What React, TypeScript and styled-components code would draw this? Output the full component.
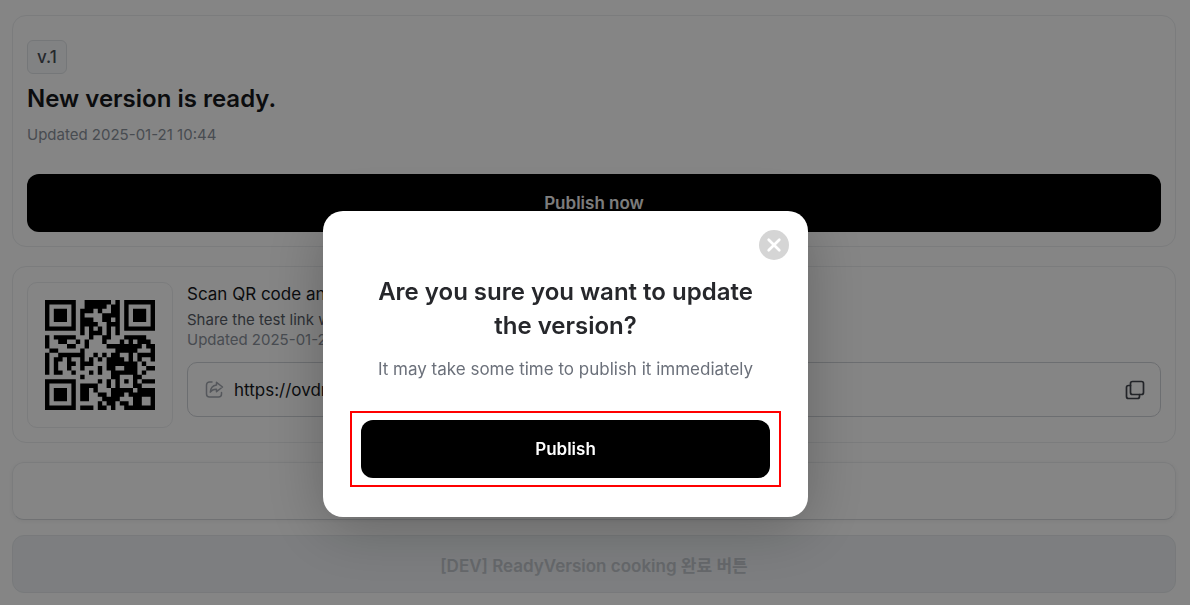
import React from "react";
import styled, { createGlobalStyle } from "styled-components";

const GlobalStyle = createGlobalStyle`
  * { box-sizing: border-box; }
  body {
    margin: 0;
    background: #ffffff;
    color: #16181c;
    font-family: Inter, "Noto Sans CJK KR", sans-serif;
    overflow: hidden;
  }
  h1, h2, p { margin: 0; }
  button, input { font: inherit; }
`;

const Page = styled.main`
  display: flex;
  flex-direction: column;
  gap: 19px;
  padding: 15px 14px 12px 12px;
`;

const Card = styled.section`
  border: 1px solid #eceef0;
  border-radius: 14px;
  padding: 15px 14px 14px;
`;

const ReleaseCard = styled(Card)`
  display: flex;
  flex-direction: column;
  align-items: flex-start;
  padding-top: 24px;
`;

const Badge = styled.span`
  padding: 0 9px;
  border: 1px solid #e1e4e8;
  border-radius: 6px;
  background: #f8f9fb;
  color: #4a4f57;
  font-size: 17px;
  font-weight: 500;
  line-height: 32px;
`;

const Title = styled.h1`
  margin-top: 8px;
  font-size: 24px;
  font-weight: 600;
  line-height: 34px;
`;

const Meta = styled.p<{ $tone?: "strong" }>`
  color: ${(p) => (p.$tone === "strong" ? "#565c66" : "#8b929c")};
  font-size: 15px;
  line-height: 20px;
`;

const ReleaseDate = styled(Meta)`
  margin: 9px 0 29px;
`;

const Button = styled.button<{ $variant?: "muted" }>`
  width: 100%;
  height: 58px;
  padding: 0;
  border: ${(p) => (p.$variant === "muted" ? "1px solid #e6e9ec" : "0")};
  border-radius: 12px;
  background: ${(p) => (p.$variant === "muted" ? "#eff2f5" : "#000000")};
  color: ${(p) => (p.$variant === "muted" ? "#c2c7cd" : "#ffffff")};
  font-size: 17px;
  font-weight: 600;
`;

const ShareCard = styled(Card)`
  display: flex;
  gap: 14px;
`;

const QrFrame = styled.div`
  flex: none;
  display: grid;
  place-items: center;
  width: 146px;
  height: 146px;
  border: 1px solid #eceef0;
  border-radius: 10px;
`;

const ShareBody = styled.div`
  flex: 1;
  min-width: 0;
  display: flex;
  flex-direction: column;
`;

const ShareTitle = styled.h2`
  margin-bottom: 4px;
  font-size: 17px;
  font-weight: 400;
  line-height: 24px;
`;

const LinkField = styled.div`
  display: flex;
  align-items: center;
  gap: 10px;
  height: 55px;
  margin-top: 12px;
  padding: 0 15px 0 17px;
  border: 1px solid #cfd3d8;
  border-radius: 10px;
`;

const LinkInput = styled.input`
  flex: 1;
  min-width: 0;
  padding: 0;
  border: 0;
  outline: 0;
  background: transparent;
  color: #16181c;
  font-size: 17px;
`;

const IconButton = styled.button`
  display: grid;
  place-items: center;
  padding: 0;
  border: 0;
  background: transparent;
`;

const Footer = styled.div`
  display: flex;
  flex-direction: column;
  gap: 15px;
`;

const EmptyPanel = styled.div`
  height: 58px;
  border: 1px solid #eceef0;
  border-bottom-color: #d6d9dd;
  border-radius: 12px;
  box-shadow: 0 1px 4px rgba(0, 0, 0, 0.06);
`;

const Overlay = styled.div`
  position: fixed;
  inset: 0;
  display: flex;
  align-items: center;
  justify-content: center;
  padding: 123px 59px 0 0;
  background: rgba(0, 0, 0, 0.48);
`;

const Dialog = styled.div`
  position: relative;
  display: flex;
  flex-direction: column;
  width: 485px;
  padding: 64px 27px 30px;
  border-radius: 20px;
  background: #ffffff;
  box-shadow: 0 10px 60px rgba(0, 0, 0, 0.25);
  text-align: center;
`;

const CloseButton = styled(IconButton)`
  position: absolute;
  top: 19px;
  right: 19px;
  width: 30px;
  height: 30px;
  border-radius: 50%;
  background: #d5d5d5;
`;

const DialogTitle = styled.h2`
  padding: 0 16px;
  color: #26272b;
  font-size: 24px;
  font-weight: 600;
  line-height: 34px;
`;

const DialogText = styled.p`
  margin: 14px 0 30px;
  color: #6b707a;
  font-size: 17px;
  line-height: 24px;
`;

const Highlight = styled.div`
  padding: 7px 9px;
  border: 2px solid #ff0000;
`;

const QR_ROWS = [
  "#######..######.#.#######",
  "#.....#..#####.##.#.....#",
  "#.###.#.###.#..##.#.###.#",
  "#.###.#.#....####.#.###.#",
  "#.###.#.###..##.#.#.###.#",
  "#.....#.####..###.#.....#",
  "#######.#.#.#.#.#.#######",
  "........#.###.#.#........",
  "#.#####...#..##...#####..",
  "#..##..#.#...#...#.#.###.",
  "#....##..#....########.##",
  ".##.....#.......#####...#",
  "#..######..#.#.##..#.####",
  "#.##.#..#.#.#.####.#.#..#",
  "#.#..##.###...#######.#..",
  "#.#..#..#...#.##..###..##",
  "#.##..#...#.#..######.#..",
  "........#......##...##...",
  "#######.....#.#.#.#.#.###",
  "#.....#.####..#.#...##...",
  "#.###.#.##.#...#####.####",
  "#.###.#.##..##.###.######",
  "#.###.#.##...####...##..#",
  "#.....#.....#.##.##.##..#",
  "#######.###.##.#..#######",
];

const QR_PATH = QR_ROWS.flatMap((row, y) =>
  [...row].map((cell, x) => (cell === "#" ? `M${x} ${y}h1v1h-1z` : ""))
).join("");

const QrCode = () => (
  <svg width="110" height="110" viewBox="0 0 25 25" role="img" aria-label="QR code">
    <path d={QR_PATH} fill="#000000" />
  </svg>
);

const ShareIcon = () => (
  <svg width="19" height="19" viewBox="0 0 19 19" fill="none" stroke="#a3a8b0" strokeWidth="1.5" strokeLinecap="round" strokeLinejoin="round" aria-hidden="true">
    <path d="M7 2H4.5A3 3 0 0 0 1.5 5v9a3 3 0 0 0 3 3h9a3 3 0 0 0 3-3v-1.5" />
    <path d="M11.5 2.300 17.500 7l-6 4.700V9.200C8.600 9 6.700 10 5.300 12.200 5.500 8.100 7.600 5.400 11.500 4.900z" />
  </svg>
);

const CopyIcon = () => (
  <svg width="20" height="20" viewBox="0 0 20 20" fill="none" stroke="#42464d" strokeWidth="1.7" strokeLinecap="round" strokeLinejoin="round" aria-hidden="true">
    <rect x="5.5" y="1.5" width="13" height="13" rx="2" />
    <path d="M5.5 5.5H3.5A2 2 0 0 0 1.5 7.5V16.500A2 2 0 0 0 3.5 18.500H12.500A2 2 0 0 0 14.500 16.500V14.500" />
  </svg>
);

const CloseIcon = () => (
  <svg width="16" height="16" viewBox="0 0 16 16" stroke="#ffffff" strokeWidth="2.700" strokeLinecap="round" aria-hidden="true">
    <path d="M2.700 2.700l10.600 10.600M13.300 2.700L2.700 13.300" />
  </svg>
);

export default function App() {
  return (
    <>
      <GlobalStyle />
      <Page>
        <ReleaseCard>
          <Badge>v.1</Badge>
          <Title>New version is ready.</Title>
          <ReleaseDate>Updated 2025-01-21 10:44</ReleaseDate>
          <Button type="button">Publish now</Button>
        </ReleaseCard>
        <ShareCard>
          <QrFrame>
            <QrCode />
          </QrFrame>
          <ShareBody>
            <ShareTitle>Scan QR code and test</ShareTitle>
            <Meta $tone="strong">Share the test link with others</Meta>
            <Meta>Updated 2025-01-21 10:44</Meta>
            <LinkField>
              <ShareIcon />
              <LinkInput aria-label="Test link" readOnly value="https://ovdr.io" />
              <IconButton type="button" aria-label="Copy link">
                <CopyIcon />
              </IconButton>
            </LinkField>
          </ShareBody>
        </ShareCard>
        <Footer>
          <EmptyPanel />
          <Button type="button" $variant="muted">
            [DEV] ReadyVersion cooking 완료 버튼
          </Button>
        </Footer>
      </Page>
      <Overlay>
        <Dialog role="dialog" aria-modal="true" aria-labelledby="dialog-title">
          <CloseButton type="button" aria-label="Close">
            <CloseIcon />
          </CloseButton>
          <DialogTitle id="dialog-title">Are you sure you want to update the version?</DialogTitle>
          <DialogText>It may take some time to publish it immediately</DialogText>
          <Highlight>
            <Button type="button">Publish</Button>
          </Highlight>
        </Dialog>
      </Overlay>
    </>
  );
}
